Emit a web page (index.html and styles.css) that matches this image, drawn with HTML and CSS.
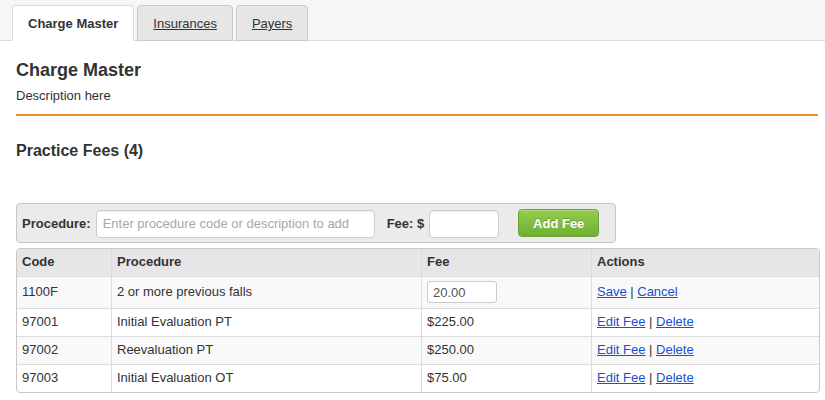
FILE: index.html
```html
<!DOCTYPE html>
<html>
<head>
<meta charset="utf-8">
<link rel="stylesheet" href="styles.css">
</head>
<body>
<div class="tabs">
  <a class="tab active">Charge Master</a>
  <a class="tab" href="#">Insurances</a>
  <a class="tab" href="#">Payers</a>
</div>
<div class="content">
  <h1 class="title">Charge Master</h1>
  <p class="desc">Description here</p>
  <div class="rule"></div>
  <h2 class="subtitle">Practice Fees (4)</h2>
  <div class="addbar">
    <label class="lbl lbl-proc">Procedure:</label>
    <input class="inp inp-proc" type="text" placeholder="Enter procedure code or description to add">
    <label class="lbl lbl-fee">Fee: $</label>
    <input class="inp inp-fee" type="text">
    <button class="btn-add" type="button">Add Fee</button>
  </div>
  <table class="fees">
    <colgroup>
      <col class="c-code"><col class="c-proc"><col class="c-fee"><col class="c-act">
    </colgroup>
    <thead>
      <tr><th>Code</th><th>Procedure</th><th>Fee</th><th>Actions</th></tr>
    </thead>
    <tbody>
      <tr class="odd edit">
        <td>1100F</td><td>2 or more previous falls</td>
        <td><input class="inp-row" type="text" value="20.00"></td>
        <td><a href="#">Save</a> | <a href="#">Cancel</a></td>
      </tr>
      <tr>
        <td>97001</td><td>Initial Evaluation PT</td><td>$225.00</td>
        <td><a href="#">Edit Fee</a> | <a href="#">Delete</a></td>
      </tr>
      <tr class="odd">
        <td>97002</td><td>Reevaluation PT</td><td>$250.00</td>
        <td><a href="#">Edit Fee</a> | <a href="#">Delete</a></td>
      </tr>
      <tr>
        <td>97003</td><td>Initial Evaluation OT</td><td>$75.00</td>
        <td><a href="#">Edit Fee</a> | <a href="#">Delete</a></td>
      </tr>
    </tbody>
  </table>
</div>
</body>
</html>
```
FILE: styles.css
```css
* { box-sizing: border-box; }
html, body {
  margin: 0;
  padding: 0;
  background: #fff;
  font-family: "Liberation Sans", Arial, Helvetica, sans-serif;
  font-size: 13px;
  color: #333;
}

.tabs {
  display: flex;
  gap: 3px;
  height: 41px;
  padding: 5px 0 0 12px;
  background: #f6f6f6;
  border-bottom: 1px solid #dcdcdc;
}
.tab {
  display: block;
  height: 36px;
  padding: 8px 15px 8px;
  line-height: 19px;
  font-size: 13px;
  color: #333;
  text-decoration: underline;
  background: #e6e6e6;
  border: 1px solid #c9c9c9;
  border-radius: 4px 4px 0 0;
}
.tab.active {
  background: #fff;
  border-color: #dcdcdc;
  border-bottom-color: #fff;
  font-weight: bold;
  text-decoration: none;
}

.content {
  margin: 0 7px 0 16px;
}
.title {
  margin: 18px 0 0;
  font-size: 18px;
  line-height: 22px;
  font-weight: bold;
  color: #333;
}
.desc {
  margin: 6px 0 0;
  font-size: 13px;
  line-height: 18px;
}
.rule {
  margin-top: 9px;
  height: 2px;
  background: #ea8e2c;
}
.subtitle {
  margin: 25px 0 0;
  font-size: 16px;
  line-height: 20px;
  font-weight: bold;
  color: #333;
}

.addbar {
  display: flex;
  align-items: center;
  width: 600px;
  height: 40px;
  margin-top: 42px;
  padding: 0 0 0 5px;
  background: #ebebeb;
  border: 1px solid #c8c8c8;
  border-radius: 4px;
}
.lbl {
  font-weight: bold;
  font-size: 13px;
  color: #333;
}
.inp {
  height: 28px;
  margin-top: 1px;
  padding: 4px 6px;
  font-family: inherit;
  font-size: 13px;
  color: #555;
  background: #fff;
  border: 1px solid #ccc;
  border-radius: 4px;
  box-shadow: inset 0 1px 1px rgba(0,0,0,0.06);
  outline: none;
}
.inp::placeholder { color: #a8a8a8; }
.inp-proc { width: 279px; margin-left: 5px; }
.lbl-fee { margin-left: 12px; }
.inp-fee { width: 70px; margin-left: 5px; }
.btn-add {
  width: 81px;
  height: 28px;
  margin-left: 19px;
  padding: 0;
  font-family: inherit;
  font-size: 13px;
  font-weight: bold;
  color: #fff;
  text-shadow: 0 -1px 0 rgba(0,0,0,0.2);
  background: linear-gradient(#95cc4e, #6fb031);
  border: 1px solid #6ea23a;
  border-radius: 4px;
  box-shadow: inset 0 1px 0 rgba(255,255,255,0.25);
}

.fees {
  width: 802px;
  margin-top: 5px;
  border-collapse: separate;
  border-spacing: 0;
  border: 1px solid #c8c8c8;
  border-radius: 4px;
  table-layout: fixed;
  font-size: 13px;
}
.c-code { width: 94px; }
.c-proc { width: 310px; }
.c-fee { width: 170px; }
.c-act { width: 228px; }
.fees th, .fees td {
  padding: 4px 5px 5px;
  line-height: 18px;
  text-align: left;
  vertical-align: middle;
  border-left: 1px solid #dcdcdc;
}
.fees th:first-child, .fees td:first-child { border-left: 0; }
.fees th {
  background: #e6e6e6;
  font-weight: bold;
}
.fees thead th:first-child { border-top-left-radius: 3px; }
.fees thead th:last-child { border-top-right-radius: 3px; }
.fees td { border-top: 1px solid #dcdcdc; }
.fees tr.odd td { background: #f9f9f9; }
.fees tbody tr:last-child td:first-child { border-bottom-left-radius: 3px; }
.fees tbody tr:last-child td:last-child { border-bottom-right-radius: 3px; }
.fees a { color: #1a4fcf; text-decoration: underline; }
.inp-row {
  display: block;
  width: 70px;
  height: 22px;
  padding: 2px 5px;
  font-family: inherit;
  font-size: 13px;
  color: #555;
  background: #fff;
  border: 1px solid #ccc;
  border-radius: 3px;
  outline: none;
}
```
